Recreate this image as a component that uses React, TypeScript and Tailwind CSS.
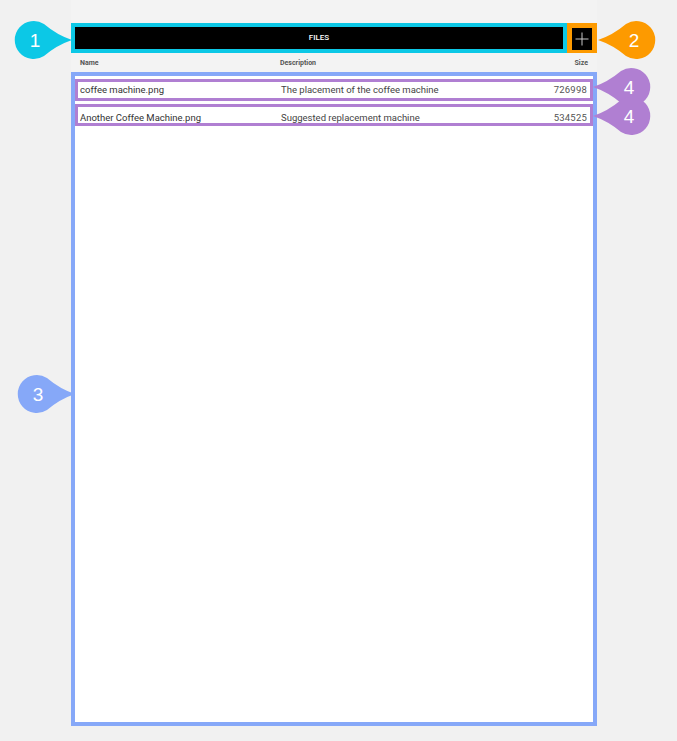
import React from "react";

function Pin({ color, label, dir }: { color: string; label: string; dir: "right" | "left" }) {
  const d = "M59 20 Q44 15 31 4 A19 19 0 1 0 31 36 Q44 25 59 20 Z";
  return (
    <svg width="60" height="40" viewBox="0 0 60 40" className="block">
      <g transform={dir === "left" ? "translate(60,0) scale(-1,1)" : undefined}>
        <path d={d} fill={color} />
      </g>
      <text
        x={dir === "left" ? 37 : 22}
        y="27"
        textAnchor="middle"
        fontSize="19"
        fill="#ffffff"
        fontFamily="'Liberation Sans', Arial, sans-serif"
      >
        {label}
      </text>
    </svg>
  );
}

const rows = [
  { name: "coffee machine.png", desc: "The placement of the coffee machine", size: "726998", align: "items-center" },
  { name: "Another Coffee Machine.png", desc: "Suggested replacement machine", size: "534525", align: "items-end" },
];

export default function App() {
  return (
    <div className="relative w-[677px] h-[741px] bg-[#f1f1f1] font-['Roboto',sans-serif] overflow-hidden">
      <div className="ml-[71px] pt-[23px] w-[526px] flex flex-col bg-[#f3f3f3]">
        {/* Top bar */}
        <div className="flex h-[30px]">
          <div className="w-[496px] border-4 border-[#0cc8e6] bg-black flex items-center justify-center">
            <span className="text-white text-[8px] font-medium">FILES</span>
          </div>
          <div className="w-[30px] border-[5px] border-b-[3px] border-[#fd9a00] bg-black flex items-center justify-center">
            <svg width="14" height="14" viewBox="0 0 14 14">
              <line x1="7" y1="0.5" x2="7" y2="13.5" stroke="#c9c9c9" strokeWidth="1" />
              <line x1="0.5" y1="7" x2="13.5" y2="7" stroke="#c9c9c9" strokeWidth="1" />
            </svg>
          </div>
        </div>
        {/* Header */}
        <div className="flex items-center h-[19px] pt-[2px] pl-[9px] pr-[9px] text-[7px] font-bold text-[#555555]">
          <div className="w-[200px]">Name</div>
          <div className="flex-1">Description</div>
          <div>Size</div>
        </div>
        {/* List */}
        <div className="h-[654px] border-4 border-[#86a8f8] bg-white pt-[3px] flex flex-col gap-[3px]">
          {rows.map((r) => (
            <div
              key={r.name}
              className={`h-[22px] border-[3px] border-[#b07fd2] bg-white flex ${r.align} pl-[2px] pr-[3px] text-[9.5px] leading-[10px] text-[#333333]`}
            >
              <div className="w-[201px] truncate">{r.name}</div>
              <div className="flex-1 text-[#444444]">{r.desc}</div>
              <div className="text-[#555555] tracking-[0.2px]">{r.size}</div>
            </div>
          ))}
        </div>
      </div>

      {/* Annotation pins */}
      <div className="absolute left-[13px] top-[20px]">
        <Pin color="#0cc8e6" label="1" dir="right" />
      </div>
      <div className="absolute left-[597px] top-[20px]">
        <Pin color="#fd9a00" label="2" dir="left" />
      </div>
      <div className="absolute left-[16px] top-[374px]">
        <Pin color="#86a8f8" label="3" dir="right" />
      </div>
      <div className="absolute left-[592px] top-[67px]">
        <Pin color="#b07fd2" label="4" dir="left" />
      </div>
      <div className="absolute left-[592px] top-[96px]">
        <Pin color="#b07fd2" label="4" dir="left" />
      </div>
    </div>
  );
}
